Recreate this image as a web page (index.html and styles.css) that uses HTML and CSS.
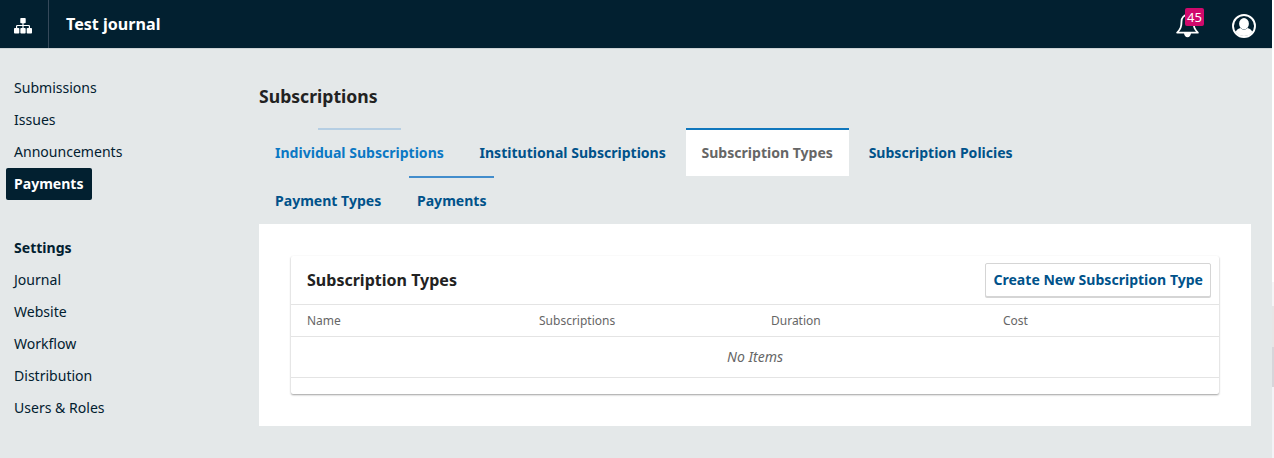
FILE: index.html
```html
<!DOCTYPE html>
<html lang="en">
<head>
<meta charset="utf-8">
<title>Subscriptions</title>
<link rel="stylesheet" href="styles.css">
</head>
<body>
<div class="app">
  <header class="header">
    <a class="contexts" aria-label="Contexts">
      <svg width="18" height="16" viewBox="0 0 18 16" fill="#fff"><rect x="6.300" y="0" width="5.400" height="5.300" rx=".8"/><rect x="0" y="10" width="5.300" height="5.500" rx=".8"/><rect x="6.350" y="10" width="5.300" height="5.500" rx=".8"/><rect x="12.700" y="10" width="5.300" height="5.500" rx=".8"/><path d="M2.600 10.500V8.200Q2.600 7.500 3.300 7.500H14.700Q15.400 7.500 15.400 8.200V10.500M9 4.500V10.500" fill="none" stroke="#fff" stroke-width="1.200"/></svg>
    </a>
    <span class="title">Test journal</span>
    <div class="actions">
      <button class="bell" aria-label="Tasks">
        <svg width="23" height="24" viewBox="0 0 23 24"><path d="M11.500 1C8 1 5.500 3.500 5.500 7.500C5.500 13 4.500 15 1.200 18.700H21.800C18.500 15 17.500 13 17.500 7.500C17.500 3.500 15 1 11.500 1Z" fill="none" stroke="#fff" stroke-width="1.800" stroke-linejoin="round"/><path d="M8 19H15C14.800 21.600 13.500 23.200 11.500 23.200S8.200 21.600 8 19Z" fill="#fff"/></svg>
        <span class="badge">45</span>
      </button>
      <svg class="user" width="24" height="24" viewBox="0 0 24 24"><circle cx="12" cy="12" r="11" fill="none" stroke="#fff" stroke-width="1.900"/><ellipse cx="12" cy="9.700" rx="4.900" ry="5.600" fill="#fff"/><path d="M3.600 18C4.500 15.600 6.500 14.800 8.600 14.100C10.500 16.100 13.500 16.100 15.400 14.100C17.500 14.800 19.500 15.600 20.400 18C18 21 15 22 12 22S6 21 3.600 18Z" fill="#fff"/></svg>
    </div>
  </header>
  <div class="body">
    <nav class="nav">
      <a>Submissions</a>
      <a>Issues</a>
      <a>Announcements</a>
      <a class="current">Payments</a>
      <div class="group">Settings</div>
      <a>Journal</a>
      <a>Website</a>
      <a>Workflow</a>
      <a>Distribution</a>
      <a>Users &amp; Roles</a>
    </nav>
    <main class="page">
      <h1>Subscriptions</h1>
      <div class="tabs">
        <a class="tab hover grow-individual">Individual Subscriptions</a>
        <a class="tab">Institutional Subscriptions</a>
        <a class="tab active">Subscription Types</a>
        <a class="tab">Subscription Policies</a>
        <a class="tab">Payment Types</a>
        <a class="tab grow-payments">Payments</a>
      </div>
      <section class="panel">
        <div class="grid">
          <div class="grid-header">
            <h2>Subscription Types</h2>
            <button class="create">Create New Subscription Type</button>
          </div>
          <div class="columns"><span>Name</span><span>Subscriptions</span><span>Duration</span><span>Cost</span></div>
          <div class="empty">No Items</div>
          <div class="footer"></div>
        </div>
      </section>
    </main>
  </div>
</div>
<div class="edge"></div>
</body>
</html>
```
FILE: styles.css
```css
* { box-sizing: border-box; }
body { margin: 0; height: 458px; display: flex; overflow: hidden; background: #fff; font: 14.060px/20px "Noto Sans", sans-serif; color: #222; }
button { font-family: inherit; margin: 0; }
.app { width: 1272px; height: 458px; background: #e4e8e9; }
.edge { flex: 1; background: linear-gradient(#fff 282px, #f5f5f6 282px 306px, #e6e6e6 306px 347px, #d6d6da 347px 387px, #f2f3f6 387px); }
.header { display: flex; height: 48px; background: #022030; color: #fff; box-shadow: 0 1px #ccd2d5; }
.contexts { width: 49px; display: flex; align-items: flex-start; justify-content: center; padding: 18px 2px 0 0; border-right: 1px solid #35495a; }
.title { padding: 12px 0 0 17px; font-size: 16.100px; line-height: 24px; font-weight: 700; }
.actions { margin-left: auto; display: flex; padding-right: 16px; }
.bell { position: relative; display: flex; align-items: flex-start; width: 56px; height: 48px; padding: 14px 0 0 16px; border: 0; background: none; margin-right: 16px; }
.badge { position: absolute; left: 25px; top: 8px; width: 19px; height: 18px; border-radius: 2px; background: #d00a6c; color: #fff; font-size: 13px; line-height: 18px; text-align: center; }
.user { margin-top: 14px; }
.body { display: flex; }
.nav { width: 259px; padding: 24px 0 0 6px; display: flex; flex-direction: column; align-items: flex-start; color: #022030; }
.nav a, .group { height: 32px; padding: 0 8px; line-height: 32px; border-radius: 2px; }
.nav .current { background: #022030; color: #fff; font-weight: 700; }
.group { margin-top: 32px; font-weight: 700; }
.page { width: 992px; padding-top: 36px; }
h1 { margin: 0 0 20px; font-size: 17.600px; line-height: 24px; }
.tabs { display: flex; flex-wrap: wrap; column-gap: 3.700px; padding-right: 96px; }
.tab { height: 48px; padding: 0 16px; line-height: 49px; font-weight: 700; color: #00528a; background-repeat: no-repeat; }
.hover { color: #0b78c4; }
.active { background: #fff; color: #666; box-shadow: inset 0 2px #1077bd; }
.grow-individual { background-image: linear-gradient(#b5cee3, #b5cee3); background-size: 83px 2px; background-position: 59px 0; }
.grow-payments { background-image: linear-gradient(#428dcc, #428dcc); background-size: 85px 2px; background-position: 8px 0; }
.panel { padding: 32px; height: 202px; background: #fff; }
.grid { height: 138px; border-radius: 2px; box-shadow: 0 1px 2px rgba(0,0,0,.38); }
.grid-header { height: 49px; padding: 0 8px 0 16px; display: flex; align-items: center; justify-content: space-between; border-bottom: 1px solid #e4e4e4; }
h2 { margin: 0; font-size: 16.050px; line-height: 24px; }
.create { height: 34px; padding: 0 7px 1px; border: 1px solid #d5d5d5; border-radius: 2px; background: #fff; box-shadow: 0 1px #d5d5d5; color: #00528a; font-size: 14.060px; font-weight: 700; }
.columns { display: grid; grid-template-columns: repeat(4, 232px); height: 32px; border-bottom: 1px solid #e4e4e4; font-size: 12px; line-height: 32px; color: #666; }
.columns span { padding-left: 16px; }
.empty { height: 41px; border-bottom: 1px solid #e4e4e4; line-height: 40px; text-align: center; font-style: italic; color: #666; font-size: 14px; }
.footer { height: 16px; }
```
